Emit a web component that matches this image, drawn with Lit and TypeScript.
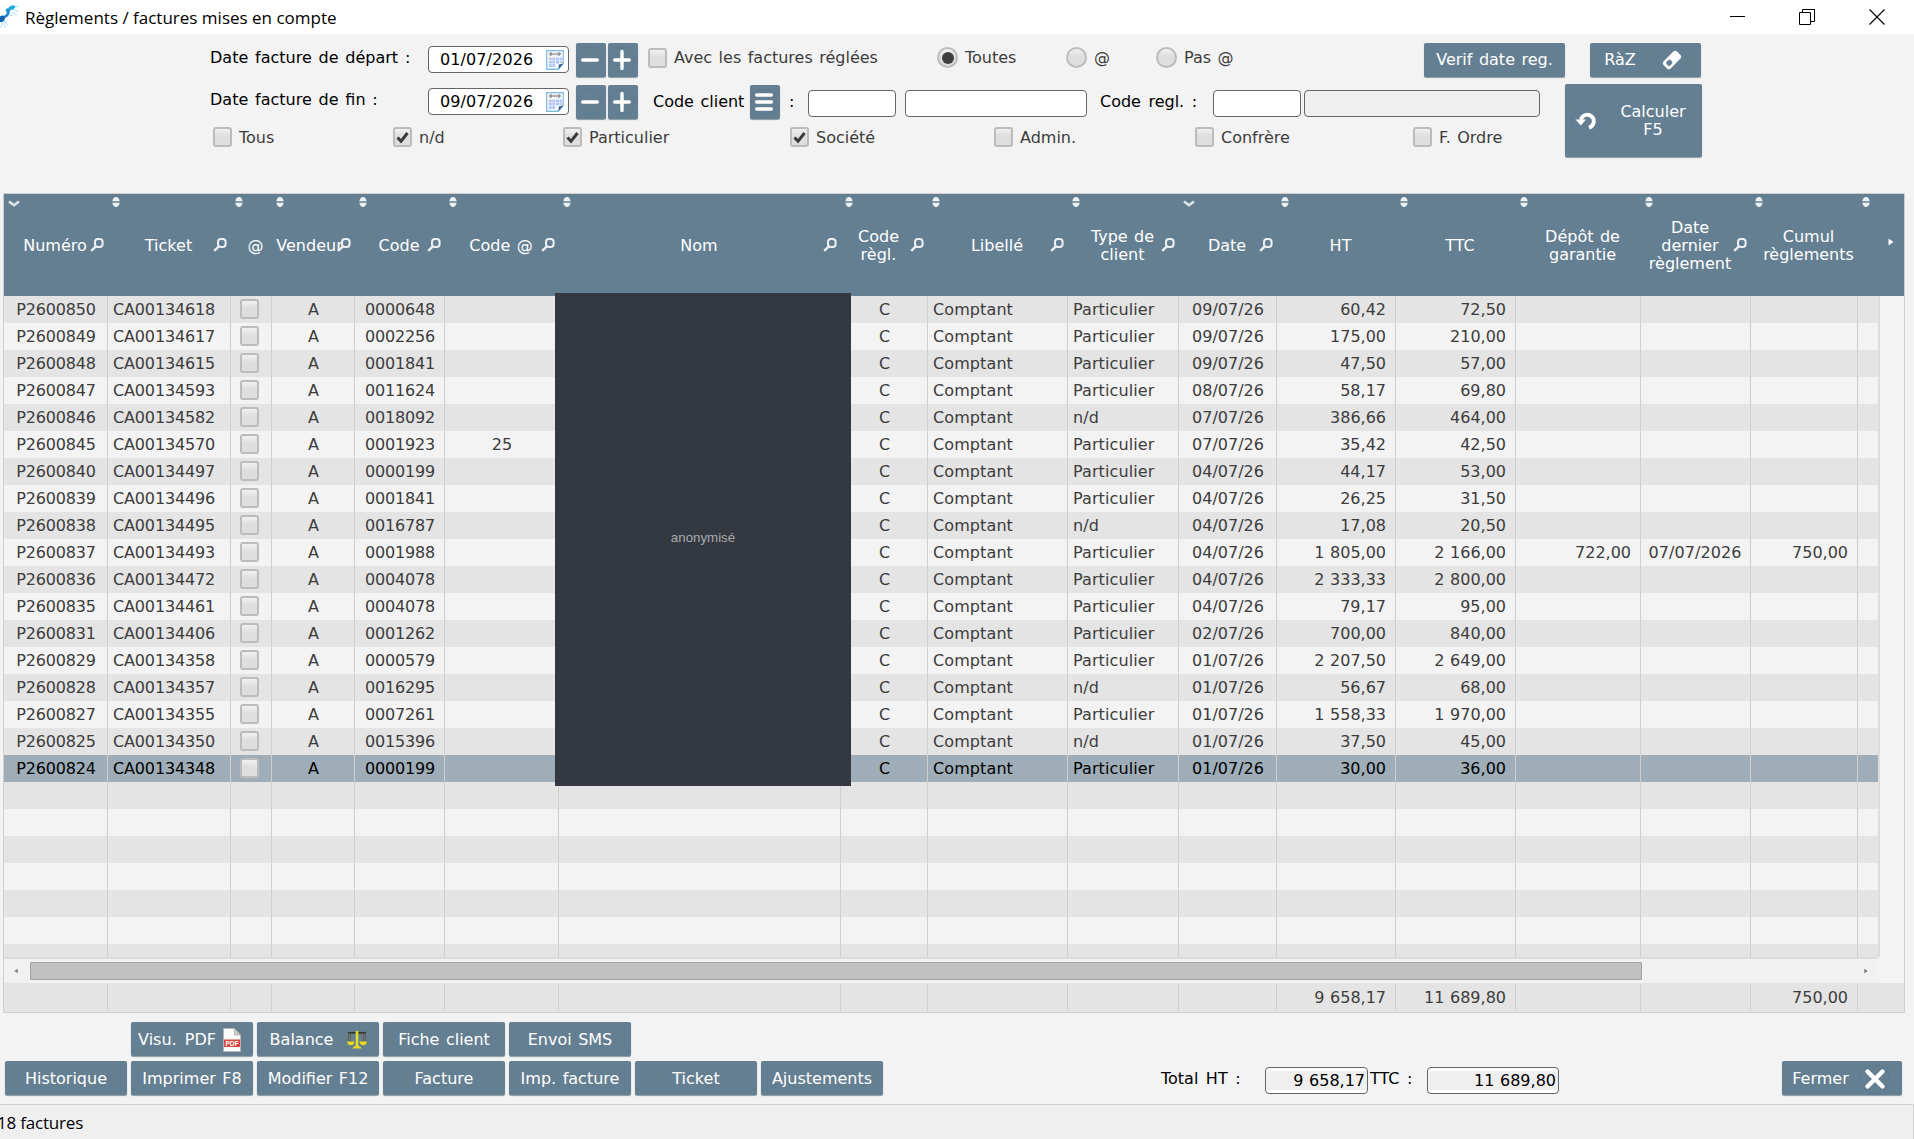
import {LitElement, html, svg, css, nothing} from 'lit';
import {customElement, property} from 'lit/decorators.js';
import {classMap} from 'lit/directives/class-map.js';
import {styleMap} from 'lit/directives/style-map.js';

interface Column {
  label: string[];
  width: number;
  align?: 'left' | 'right' | 'center' | 'left digits' | 'center digits' | 'center wide';
  sort?: 'both' | 'down';
  search?: boolean;
  // small offset of the label, in px
  shift?: number;
}

const COLUMNS: Column[] = [
  {label: ['Numéro'], width: 104, align: 'center digits', sort: 'down', search: true},
  {label: ['Ticket'], width: 123, align: 'left digits', sort: 'both', search: true},
  {label: ['@'], width: 41, sort: 'both', shift: 10},
  {label: ['Vendeur'], width: 83, sort: 'both', search: true, shift: -6},
  {label: ['Code'], width: 90, align: 'center digits', sort: 'both', search: true},
  {label: ['Code @'], width: 114, sort: 'both', search: true},
  {label: ['Nom'], width: 282, align: 'left', sort: 'both', search: true},
  {label: ['Code', 'règl.'], width: 87, sort: 'both', search: true, shift: -10},
  {label: ['Libellé'], width: 140, align: 'left', sort: 'both', search: true},
  {label: ['Type de', 'client'], width: 111, align: 'left', sort: 'both', search: true},
  {label: ['Date'], width: 98, sort: 'down', search: true},
  {label: ['HT'], width: 119, align: 'right', sort: 'both', shift: 10},
  {label: ['TTC'], width: 120, align: 'right', sort: 'both', shift: 10},
  {label: ['Dépôt de', 'garantie'], width: 125, align: 'right', sort: 'both', shift: 10},
  {label: ['Date', 'dernier', 'règlement'], width: 110, align: 'center wide', sort: 'both', search: true, shift: -10},
  {label: ['Cumul', 'règlements'], width: 107, align: 'right', sort: 'both', shift: 10},
  {label: [], width: 20, sort: 'both'},
];

// numero, ticket, code, code @, type, date, ht, ttc, depot, dernier, cumul
const INVOICES: string[][] = [
  ['P2600850', 'CA00134618', '0000648', '', 'Particulier', '09/07/26', '60,42', '72,50'],
  ['P2600849', 'CA00134617', '0002256', '', 'Particulier', '09/07/26', '175,00', '210,00'],
  ['P2600848', 'CA00134615', '0001841', '', 'Particulier', '09/07/26', '47,50', '57,00'],
  ['P2600847', 'CA00134593', '0011624', '', 'Particulier', '08/07/26', '58,17', '69,80'],
  ['P2600846', 'CA00134582', '0018092', '', 'n/d', '07/07/26', '386,66', '464,00'],
  ['P2600845', 'CA00134570', '0001923', '25', 'Particulier', '07/07/26', '35,42', '42,50'],
  ['P2600840', 'CA00134497', '0000199', '', 'Particulier', '04/07/26', '44,17', '53,00'],
  ['P2600839', 'CA00134496', '0001841', '', 'Particulier', '04/07/26', '26,25', '31,50'],
  ['P2600838', 'CA00134495', '0016787', '', 'n/d', '04/07/26', '17,08', '20,50'],
  ['P2600837', 'CA00134493', '0001988', '', 'Particulier', '04/07/26', '1 805,00', '2 166,00', '722,00', '07/07/2026', '750,00'],
  ['P2600836', 'CA00134472', '0004078', '', 'Particulier', '04/07/26', '2 333,33', '2 800,00'],
  ['P2600835', 'CA00134461', '0004078', '', 'Particulier', '04/07/26', '79,17', '95,00'],
  ['P2600831', 'CA00134406', '0001262', '', 'Particulier', '02/07/26', '700,00', '840,00'],
  ['P2600829', 'CA00134358', '0000579', '', 'Particulier', '01/07/26', '2 207,50', '2 649,00'],
  ['P2600828', 'CA00134357', '0016295', '', 'n/d', '01/07/26', '56,67', '68,00'],
  ['P2600827', 'CA00134355', '0007261', '', 'Particulier', '01/07/26', '1 558,33', '1 970,00'],
  ['P2600825', 'CA00134350', '0015396', '', 'n/d', '01/07/26', '37,50', '45,00'],
  ['P2600824', 'CA00134348', '0000199', '', 'Particulier', '01/07/26', '30,00', '36,00'],
];

const EMPTY_ROWS = 7;

const icons = {
  logo: svg`<svg width="19" height="26" viewBox="0 0 19 26">
    <g stroke="#7fd4ee" stroke-width="0.7" fill="none"><path d="M13 5l5.500 3M11 8l6 3M9 11l4 1M4 17l1 7M2 18l-1 6M4 17l4 4M13 3l5-.6"/></g>
    <path d="M0 12.500c1.500-1.500 4.500-1.500 5 .5s-1 4.500-3 5H0z" fill="#0b62b4"/>
    <path d="M4 13c1.500 0 4-2 4.500-5" stroke="#1583cf" stroke-width="2.400" fill="none"/>
    <circle cx="8" cy="6.500" r="2.200" fill="#1796d8"/>
    <ellipse cx="11.800" cy="3.600" rx="3.400" ry="2.100" transform="rotate(-22 11.800 3.600)" fill="#20a9e0"/>
  </svg>`,
  minimize: svg`<svg width="15" height="15" viewBox="0 0 15 15"><path d="M0 7.500h15" stroke="#000" fill="none"/></svg>`,
  restore: svg`<svg width="16" height="16" viewBox="0 0 16 16"><path d="M.5 3.500h11v12H.5zM3.500 3.500V.5h12v12H11.500" stroke="#000" fill="none"/></svg>`,
  close: svg`<svg width="16" height="16" viewBox="0 0 16 16"><path d="M.5.5l15 15M15.500.5l-15 15" stroke="#000" stroke-width="1.100" fill="none"/></svg>`,
  calendar: svg`<svg width="18" height="20" viewBox="0 0 18 20">
    <path d="M.75.75h16.500v12.500l-5 6H.75z" fill="#fff" stroke="#7dbce6" stroke-width="1.300"/>
    <path d="M1.500 1.500h15v5h-15z" fill="#eef1f4"/>
    <path d="M3 4h12M5 2v4M13 2v4" stroke="#777" stroke-width="1"/>
    <g fill="#a9c4ff"><path d="M6.300 7.500h3v3h-3zM10 7.500h3v3h-3zM13.500 7.500h2.500v3h-2.500zM2.800 11h3v2.600h-3zM6.300 11h3v2.600h-3zM10 11h3v2.600h-3zM2.800 14.300h3v2.800h-3zM6.300 14.300h3v2.800h-3z"/></g>
    <path d="M2.800 7.500h3v3h-3zM13.500 11h2.500v2h-2.500z" fill="#c6c6c6"/>
    <path d="M17.500 13.500l-5 5.500.3-4.500z" fill="#35618f"/>
  </svg>`,
  minus: svg`<svg width="26" height="26" viewBox="0 0 26 26"><circle cx="13" cy="13" r="12.500" fill="none" stroke="#5f7a8e"/><path d="M5.700 13h14.600" stroke="#fff" stroke-width="3.400" stroke-linecap="round"/></svg>`,
  plus: svg`<svg width="26" height="26" viewBox="0 0 26 26"><circle cx="13" cy="13" r="12.500" fill="none" stroke="#5f7a8e"/><path d="M5.700 13h14.600M13 4.500v17" stroke="#fff" stroke-width="3.400" stroke-linecap="round"/></svg>`,
  menu: svg`<svg width="26" height="26" viewBox="0 0 26 26"><circle cx="13" cy="13" r="12.500" fill="none" stroke="#5f7a8e"/><path d="M5.700 6h14.600M5.700 13h14.600M5.700 20h14.600" stroke="#fff" stroke-width="3.600" stroke-linecap="round"/></svg>`,
  eraser: svg`<svg width="30" height="30" viewBox="0 0 30 30"><circle cx="15" cy="15" r="14.500" fill="none" stroke="#5f7a8e"/>
    <g transform="rotate(45 15 15)"><rect x="10" y="5.500" width="10" height="19" rx="2.500" fill="#fff"/><rect x="12.400" y="16" width="5.200" height="5.600" rx="1.500" fill="#657f92"/></g></svg>`,
  undo: svg`<svg width="30" height="30" viewBox="0 0 30 30"><circle cx="15" cy="15" r="14.500" fill="none" stroke="#5f7a8e"/>
    <path d="M18 21.800c5.500-2 6.200-8.500 2.500-11.500s-9.500-1.500-10.500 3.500" stroke="#fff" stroke-width="3.800" fill="none"/><path d="M4.500 13.400h10.500l-5.200 6z" fill="#fff"/></svg>`,
  cross: svg`<svg width="30" height="30" viewBox="0 0 30 30"><circle cx="15" cy="15" r="14.500" fill="none" stroke="#5f7a8e"/><path d="M7.500 7.500l15 15M22.500 7.500l-15 15" stroke="#fff" stroke-width="4.400" stroke-linecap="round"/></svg>`,
  pdf: svg`<svg width="18" height="24" viewBox="0 0 18 24">
    <path d="M.5.500h11l6 6.500v16.500H.5z" fill="#fafafa" stroke="#b5b5b5" stroke-width="0.800"/>
    <path d="M11.500.5V7h6z" fill="#cfcfcf" stroke="#9a9a9a" stroke-width="0.600"/>
    <path d="M1 11.500h16v7.500H1z" fill="#d9463f"/>
    <text x="9" y="17.600" text-anchor="middle" font-family="Liberation Sans" font-weight="bold" font-size="6.500" word-spacing="0" fill="#fff">PDF</text>
  </svg>`,
  scales: svg`<svg width="22" height="20" viewBox="0 0 22 20">
    <path d="M2 2.800h18" stroke="#3a3a2a" stroke-width="1.800"/>
    <path d="M4.500 3.500v8M17.500 3.500v8M3 3.500l-1 8M19 3.500l1 8" stroke="#6b5a3c" stroke-width="0.900"/>
    <path d="M11 1v15" stroke="#e8dc1e" stroke-width="2.600"/>
    <path d="M1 11.500h7.500c-.5 2.800-1.800 3.700-3.700 3.700S1.500 14.300 1 11.500zM13.500 11.500H21c-.5 2.800-1.800 3.700-3.700 3.700s-3.300-.9-3.800-3.700z" fill="#e8dc1e"/>
    <path d="M6.500 18.500c.5-2 2.500-2.500 4.500-3.500 2 1 4 1.500 4.500 3.500z" fill="#e8dc1e"/>
  </svg>`,
  search: svg`<svg width="14" height="14" viewBox="0 0 14 14"><rect x="5" y="1" width="7.600" height="8" rx="3" stroke="#eef1f3" stroke-width="2" fill="none"/><path d="M5.600 8.600L1.200 12.800" stroke="#eef1f3" stroke-width="2.400"/></svg>`,
  sortBoth: svg`<svg width="8" height="12" viewBox="0 0 8 12"><path d="M.3 5.200C.8 2.600 2.200 1 4 1s3.200 1.600 3.700 4.200zM.3 6.800h7.400C7.200 9.400 5.800 11 4 11S.8 9.400.3 6.800z" fill="#eef1f3"/></svg>`,
  sortDown: svg`<svg width="12" height="8" viewBox="0 0 12 8"><path d="M1 1.500l5 3.700 5-3.700" stroke="#dfe5e9" stroke-width="2.600" fill="none"/></svg>`,
  arrow: svg`<svg width="6" height="8" viewBox="0 0 6 8"><path d="M.5 .5v7L5.500 4z" fill="currentColor"/></svg>`,
};

@customElement('tool-button')
export class ToolButton extends LitElement {
  static override styles = css`
    :host {
      display: flex;
      align-items: center;
      justify-content: center;
      box-sizing: border-box;
      height: 34px;
      padding-top: 1px;
      border-radius: 2px;
      background: #657f92;
      box-shadow: 0 1px 1px #8698a5;
      color: #fff;
      line-height: 18px;
      text-align: center;
      white-space: nowrap;
    }
  `;

  override render() {
    return html`<slot></slot>`;
  }
}

@customElement('check-mark')
export class CheckMark extends LitElement {
  static override styles = css`
    :host {
      display: inline-flex;
      align-items: center;
      gap: 7px;
      color: #3c3c3c;
      white-space: nowrap;
    }
    .box {
      box-sizing: border-box;
      display: flex;
      align-items: center;
      justify-content: center;
      width: 19px;
      height: 20px;
      border: 2px solid #bcbcbc;
      border-radius: 3px;
      background: linear-gradient(#f1f1f1, #dedede 45%);
    }
    .radio {
      width: 21px;
      height: 21px;
      border-radius: 50%;
    }
    .dot {
      width: 12px;
      height: 12px;
      border-radius: 50%;
      background: #3e3e3e;
    }
  `;

  @property({type: Boolean})
  checked = false;

  @property({type: Boolean})
  radio = false;

  override render() {
    const tick = svg`<svg width="13" height="13" viewBox="0 0 13 13"><path d="M1.500 6.500l3.500 3.800L11.500 2" stroke="#3a3a3a" stroke-width="3" fill="none"/></svg>`;
    return html`
      <span class=${classMap({box: true, radio: this.radio})}>
        ${this.checked ? (this.radio ? html`<span class="dot"></span>` : tick) : nothing}
      </span>
      <slot></slot>
    `;
  }
}

@customElement('invoice-table')
export class InvoiceTable extends LitElement {
  static override styles = css`
    :host {
      display: flex;
      flex-direction: column;
      box-sizing: border-box;
      width: 1902px;
      height: 820px;
      border: 1px solid #cfcfcf;
      color: #3c3c3c;
      position: relative;
    }
    .line {
      display: flex;
    }
    .head {
      height: 102px;
      background: #657f92;
      color: #fff;
    }
    .th {
      position: relative;
      flex: none;
      box-sizing: border-box;
      display: flex;
      flex-direction: column;
      align-items: center;
      justify-content: center;
      padding-top: 2px;
      line-height: 18px;
      white-space: nowrap;
    }
    .label {
      margin-right: 2px;
    }
    .th svg {
      display: block;
    }
    .sort {
      position: absolute;
      top: 2px;
      left: 4px;
    }
    .sort.down {
      top: 6px;
    }
    .search {
      position: absolute;
      right: 4px;
      top: 44px;
    }
    .more {
      flex: 1;
      display: flex;
      align-items: center;
      padding: 0 0 6px 10px;
    }
    .middle {
      display: flex;
      height: 661px;
      overflow: hidden;
    }
    .rows {
      width: 1874px;
      border-right: 2px solid #dcdcdc;
    }
    .row {
      height: 27px;
      line-height: 27px;
      background: #f3f3f3;
    }
    .row.odd {
      background: #e4e4e4;
    }
    .row.selected {
      background: #9eadb7;
      color: #000;
    }
    .td {
      flex: none;
      box-sizing: border-box;
      border-right: 1px solid #cfcfcf;
      padding: 0 1px 0 2px;
      text-align: center;
      white-space: nowrap;
    }
    .td:last-child {
      border-right: none;
    }
    .td.left {
      text-align: left;
      padding-left: 5px;
      letter-spacing: 0.1px;
    }
    .td.right {
      text-align: right;
      padding-right: 9px;
      word-spacing: 0.5px;
    }
    .td.digits {
      letter-spacing: -0.15px;
    }
    .td.wide {
      padding-right: 3px;
      letter-spacing: 0.1px;
    }
    .box {
      display: flex;
      justify-content: center;
      padding: 3px 4px 0 0;
      line-height: 0;
    }
    .scroll {
      box-sizing: border-box;
      height: 26px;
      border-top: 2px solid #dcdcdc;
      background: #f1f1f1;
      display: flex;
      align-items: center;
      color: #777;
      padding-left: 10px;
      width: 1874px;
    }
    .flip {
      transform: scaleX(-1);
    }
    .thumb {
      box-sizing: border-box;
      width: 1612px;
      height: 18px;
      margin-left: 12px;
      margin-right: auto;
      border: 1px solid #a3a3a3;
      border-radius: 1px;
      background: #c0c0c0;
    }
    .scroll svg {
      display: block;
      width: 4px;
      height: 6px;
    }
    .next {
      margin-right: 10px;
    }
    .foot {
      height: 27px;
      padding: 1px 0;
      line-height: 27px;
      background: #e4e4e4;
    }
    .mask {
      position: absolute;
      left: 551px;
      top: 99px;
      box-sizing: border-box;
      width: 296px;
      height: 493px;
      padding-bottom: 5px;
      display: flex;
      align-items: center;
      justify-content: center;
      background: #343840;
      color: #a9abaf;
      font: 13.3px 'Liberation Sans', Arial, sans-serif;
    }
  `;

  private cells(values: unknown[]) {
    return COLUMNS.map(
      (c, i) => html`<div class="td ${c.align ?? 'center'}" style=${styleMap({width: `${c.width}px`})}>${values[i] ?? nothing}</div>`
    );
  }

  private header(c: Column) {
    const style = {
      width: `${c.width}px`,
      paddingLeft: `${Math.max(c.shift ?? 0, 0)}px`,
      paddingRight: `${Math.max(-(c.shift ?? 0), 0)}px`,
    };
    return html`
      <div class="th" style=${styleMap(style)}>
        <span class="sort ${c.sort}">${c.sort === 'down' ? icons.sortDown : icons.sortBoth}</span>
        ${c.label.map((l) => html`<span class="label">${l}</span>`)}
        ${c.search ? html`<span class="search">${icons.search}</span>` : nothing}
      </div>
    `;
  }

  private invoice(r: string[], i: number) {
    const [num, ticket, code, web, type, date, ht, ttc, deposit, last, total] = r;
    const box = html`<span class="box"><check-mark></check-mark></span>`;
    const values = [num, ticket, box, 'A', code, web, '', 'C', 'Comptant', type, date, ht, ttc, deposit, last, total];
    const selected = i === INVOICES.length - 1;
    return html`<div class=${classMap({line: true, row: true, odd: i % 2 === 0, selected})}>${this.cells(values)}</div>`;
  }

  override render() {
    const totals = Array(16).fill('');
    totals[11] = '9 658,17';
    totals[12] = '11 689,80';
    totals[15] = '750,00';
    return html`
      <div class="line head">
        ${COLUMNS.map((c) => this.header(c))}
        <div class="more">${icons.arrow}</div>
      </div>
      <div class="middle">
        <div class="rows">
          ${INVOICES.map((r, i) => this.invoice(r, i))}
          ${Array.from({length: EMPTY_ROWS}, (_, i) => html`
            <div class=${classMap({line: true, row: true, odd: i % 2 === 0})}>${this.cells([])}</div>
          `)}
        </div>
      </div>
      <div class="scroll">
        <span class="flip">${icons.arrow}</span>
        <div class="thumb"></div>
        <span class="next">${icons.arrow}</span>
      </div>
      <div class="line foot">${this.cells(totals)}</div>
      <div class="mask">anonymisé</div>
    `;
  }
}

@customElement('app-root')
export class AppRoot extends LitElement {
  static override styles = css`
    :host {
      display: flex;
      flex-direction: column;
      box-sizing: border-box;
      width: 1914px;
      height: 1139px;
      overflow: hidden;
      background: #f3f3f3;
      color: #000;
      font: 16px Verdana, 'DejaVu Sans', sans-serif;
      word-spacing: 1.4px;
    }
    svg {
      display: block;
      flex: none;
    }
    .titlebar {
      flex: none;
      display: flex;
      align-items: center;
      box-sizing: border-box;
      height: 34px;
      padding-right: 29px;
      background: #fff;
      font: 17px 'Open Sans', sans-serif;
      word-spacing: 0;
    }
    .logo {
      width: 25px;
    }
    .title {
      flex: 1;
    }
    .window {
      display: flex;
      gap: 54px;
      padding-bottom: 1px;
    }
    .filters {
      flex: none;
      height: 159px;
      box-sizing: border-box;
      padding: 8px 0 0 210px;
    }
    .row {
      display: grid;
      align-items: center;
      height: 35px;
      white-space: nowrap;
    }
    .first {
      grid-template-columns: 218px 148px 32px 40px 289px 129px 90px 268px 166px 111px;
      margin-bottom: 7px;
    }
    .second {
      grid-template-columns: 218px 148px 32px 45px 97px 39px 19px 97px 195px 113px 91px 236px;
    }
    .third {
      grid-template-columns: 180px 170px 227px 204px 201px 218px auto;
      height: 20px;
      margin-top: 8px;
      padding-left: 3px;
    }
    .label {
      word-spacing: 2.4px;
    }
    .first .label,
    .second .date-label,
    .first check-mark {
      padding-bottom: 4px;
    }
    .label.date-label {
      word-spacing: 1.7px;
    }
    .lower {
      display: flex;
      gap: 25px;
    }
    .input {
      box-sizing: border-box;
      height: 27px;
      border: 1px solid #666;
      border-radius: 4px;
      background: #fff;
    }
    .date {
      display: flex;
      align-items: center;
      justify-content: space-between;
      width: 141px;
      padding: 0 4px 0 11px;
      letter-spacing: 0.1px;
    }
    .code {
      width: 88px;
      margin-top: 4px;
    }
    .name {
      width: 182px;
      margin-top: 4px;
    }
    .readonly {
      margin-top: 4px;
      background: #efefef;
    }
    .square {
      width: 30px;
      padding: 0 3px 0 0;
    }
    .verif {
      width: 141px;
    }
    .calc {
      width: 137px;
      height: 73px;
      gap: 19px;
      padding-right: 10px;
    }
    .reset {
      gap: 21px;
      padding-right: 0;
    }
    .content {
      flex: none;
      padding-left: 3px;
    }
    .actions {
      flex: none;
      display: flex;
      align-items: flex-end;
      box-sizing: border-box;
      height: 91px;
      padding: 0 12px 9px 5px;
    }
    .buttons {
      display: grid;
      grid-template-columns: repeat(7, 122px);
      gap: 5px 4px;
    }
    .start {
      grid-column: 2;
    }
    .pdf {
      gap: 7px;
      padding-right: 5px;
      word-spacing: 3px;
    }
    .balance {
      gap: 13px;
      padding-left: 2px;
    }
    .newline {
      grid-column: 1;
    }
    .totals {
      display: flex;
      align-items: center;
      flex: 1;
      height: 27px;
      margin-left: 278px;
      margin-bottom: 1px;
    }
    .totals .input {
      display: flex;
      align-items: center;
      justify-content: flex-end;
      padding: 0 2px 0 0;
      background: linear-gradient(#fff 3px, #efefef 3px, #efefef 22px, #fff 22px);
      word-spacing: 0.5px;
    }
    .ht-label {
      width: 104px;
      padding-bottom: 4px;
    }
    .ttc-label {
      width: 59px;
      padding: 0 0 4px 2px;
      box-sizing: border-box;
    }
    .ht {
      width: 103px;
    }
    .ttc {
      width: 132px;
    }
    .close {
      width: 120px;
      gap: 11px;
      padding-right: 2px;
    }
    .status {
      flex: 1;
      box-sizing: border-box;
      border-top: 1px solid #d2d2d2;
      border-right: 1px solid #d2d2d2;
      background: #efefef;
      font: 17px/34px 'Open Sans', sans-serif;
      letter-spacing: -0.2px;
      word-spacing: 0;
      text-indent: -3px;
      padding-top: 1px;
    }
  `;

  private dateField(value: string) {
    return html`
      <div class="input date">${value}${icons.calendar}</div>
      <tool-button class="square">${icons.minus}</tool-button>
      <tool-button class="square">${icons.plus}</tool-button>
    `;
  }

  override render() {
    return html`
      <div class="titlebar">
        <div class="logo">${icons.logo}</div>
        <div class="title">Règlements / factures mises en compte</div>
        <div class="window">${icons.minimize}${icons.restore}${icons.close}</div>
      </div>
      <div class="filters">
        <div class="row first">
          <div class="label date-label">Date facture de départ :</div>
          ${this.dateField('01/07/2026')}
          <check-mark>Avec les factures réglées</check-mark>
          <check-mark radio checked>Toutes</check-mark>
          <check-mark radio>@</check-mark>
          <check-mark radio>Pas @</check-mark>
          <tool-button class="verif">Verif date reg.</tool-button>
          <tool-button class="reset">RàZ ${icons.eraser}</tool-button>
        </div>
        <div class="lower">
          <div>
            <div class="row second">
              <div class="label date-label">Date facture de fin :</div>
              ${this.dateField('09/07/2026')}
              <div>Code client</div>
              <tool-button class="square">${icons.menu}</tool-button>
              <div>:</div>
              <div class="input code"></div>
              <div class="input name"></div>
              <div class="label">Code regl. :</div>
              <div class="input code"></div>
              <div class="input readonly"></div>
            </div>
            <div class="row third">
              <check-mark>Tous</check-mark>
              <check-mark checked>n/d</check-mark>
              <check-mark checked>Particulier</check-mark>
              <check-mark checked>Société</check-mark>
              <check-mark>Admin.</check-mark>
              <check-mark>Confrère</check-mark>
              <check-mark>F. Ordre</check-mark>
            </div>
          </div>
          <tool-button class="calc">${icons.undo}<span>Calculer<br />F5</span></tool-button>
        </div>
      </div>
      <div class="content"><invoice-table></invoice-table></div>
      <div class="actions">
        <div class="buttons">
          <tool-button class="start pdf">Visu. PDF ${icons.pdf}</tool-button>
          <tool-button class="balance">Balance ${icons.scales}</tool-button>
          <tool-button>Fiche client</tool-button>
          <tool-button>Envoi SMS</tool-button>
          <tool-button class="newline">Historique</tool-button>
          <tool-button>Imprimer F8</tool-button>
          <tool-button>Modifier F12</tool-button>
          <tool-button>Facture</tool-button>
          <tool-button>Imp. facture</tool-button>
          <tool-button>Ticket</tool-button>
          <tool-button>Ajustements</tool-button>
        </div>
        <div class="totals">
          <div class="label ht-label">Total HT :</div>
          <div class="input ht">9 658,17</div>
          <div class="label ttc-label">TTC :</div>
          <div class="input ttc">11 689,80</div>
        </div>
        <tool-button class="close">Fermer ${icons.cross}</tool-button>
      </div>
      <div class="status">18 factures</div>
    `;
  }
}

declare global {
  interface HTMLElementTagNameMap {
    'app-root': AppRoot;
    'invoice-table': InvoiceTable;
    'check-mark': CheckMark;
    'tool-button': ToolButton;
  }
}
